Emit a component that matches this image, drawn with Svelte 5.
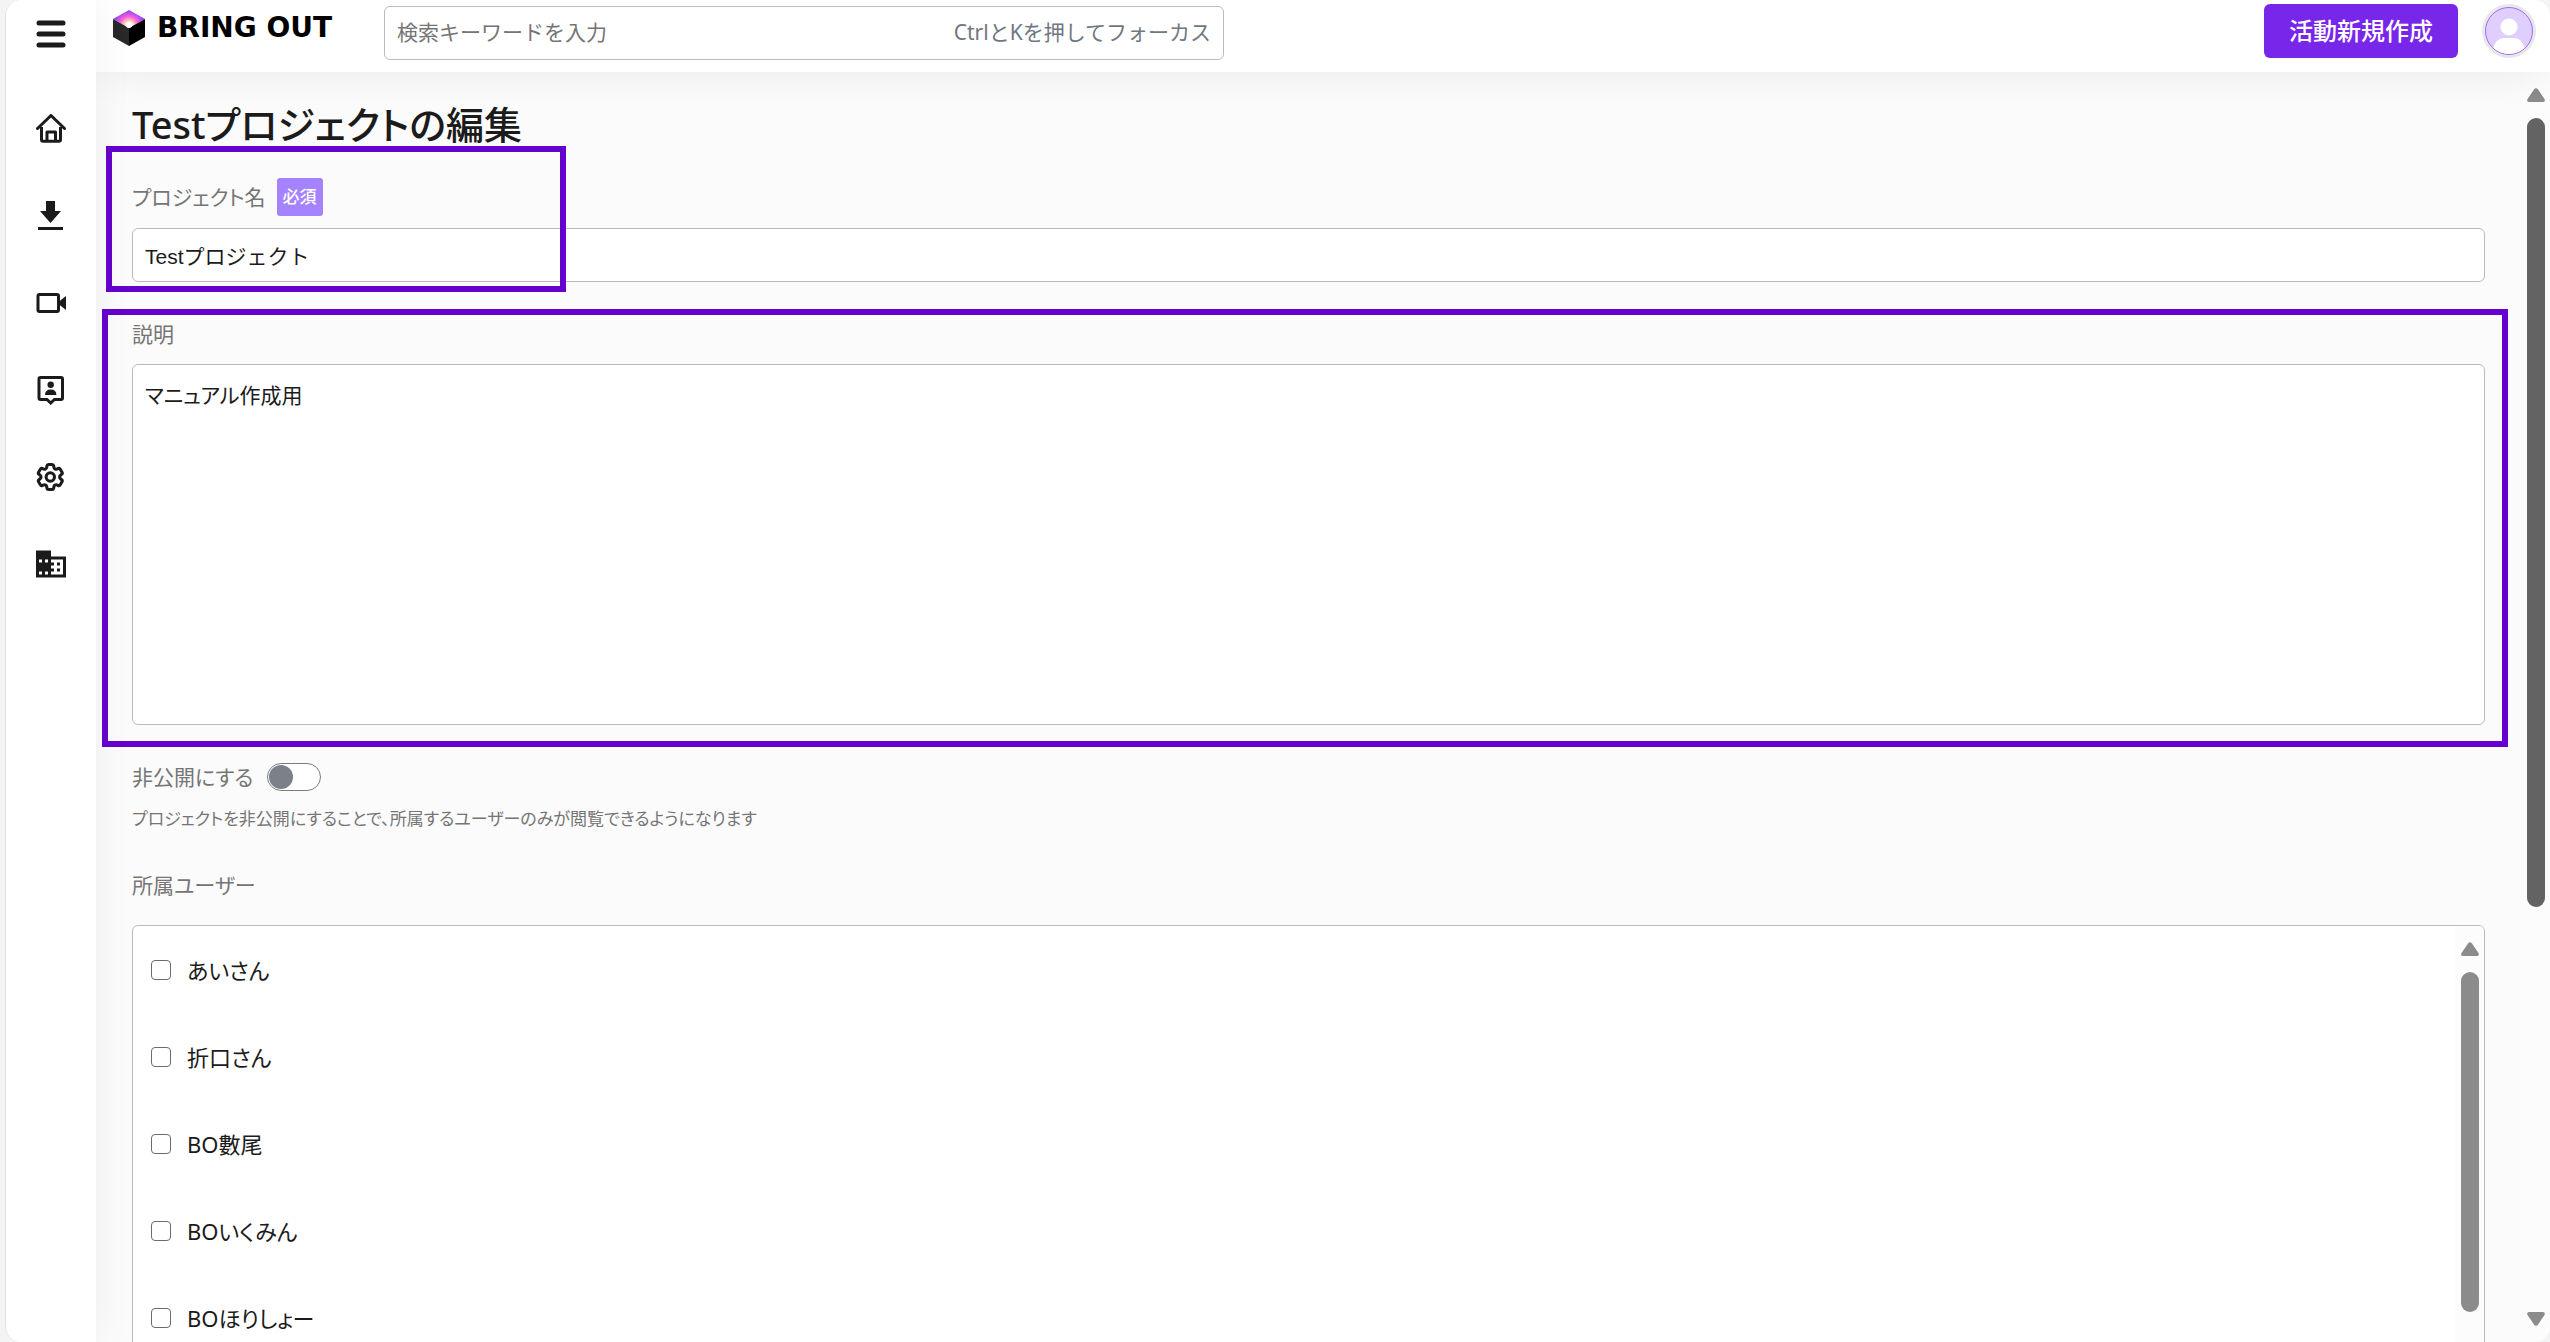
<script>
  const users = [
    { id: 1, name: 'あいさん' },
    { id: 2, name: '折口さん' },
    { id: 3, name: 'BO數尾' },
    { id: 4, name: 'BOいくみん' },
    { id: 5, name: 'BOほりしょー' },
  ];

  let name = $state('Testプロジェクト');
  let description = $state('マニュアル作成用');
  let isPrivate = $state(false);
  let keyword = $state('');
  let members = $state([]);
</script>

{#snippet scrollbar(kind)}
  <div class="scrollbar {kind}" aria-hidden="true">
    <svg class="arrow" viewBox="0 0 18 14"><path d="M7 1.5Q9-1 11 1.5L17.5 11Q18.5 14 16 14H2Q-.5 14 .5 11Z" /></svg>
    <div class="track"><div class="thumb"></div></div>
    <svg class="arrow down" viewBox="0 0 18 14"><path d="M7 1.5Q9-1 11 1.5L17.5 11Q18.5 14 16 14H2Q-.5 14 .5 11Z" /></svg>
  </div>
{/snippet}

<div class="window">
  <nav class="sidebar">
    <button class="menu" type="button" aria-label="メニュー">
      <svg viewBox="0 0 30 30" stroke="#1b1b1b" stroke-width="5" stroke-linecap="round">
        <path d="M3 4h24M3 15h24M3 26h24" />
      </svg>
    </button>
    <a href="#home" aria-label="ホーム">
      <svg viewBox="0 0 30 30" fill="none" stroke="#1b1b1b" stroke-width="3" stroke-linejoin="round">
        <path d="M5.500 13v12.500q0 1.800 1.800 1.800h15.400q1.800 0 1.800-1.800V13" />
        <path d="M1.500 14.500 15 1.500l13.500 13" stroke-linecap="round" />
        <path d="M11 27v-9h8.500v9" />
      </svg>
    </a>
    <a href="#download" aria-label="ダウンロード">
      <svg viewBox="0 0 30 30" fill="#1b1b1b"><path d="M10 0h9v10h6L14.500 22 4 10h6zM2 26h25v3H2z" /></svg>
    </a>
    <a href="#video" aria-label="動画">
      <svg viewBox="0 0 30 30">
        <rect x="2" y="6.500" width="20.500" height="17" rx="1.500" fill="none" stroke="#1b1b1b" stroke-width="3" />
        <path d="M23 13.500 30 8v14l-7-5.500z" fill="#1b1b1b" />
      </svg>
    </a>
    <a href="#contacts" aria-label="連絡先">
      <svg viewBox="0 0 30 30" fill="#1b1b1b">
        <path d="M4.500 2.500h20.500q1.500 0 1.500 1.500v19q0 1.500-1.500 1.500h-6.500L14.700 28 11 24.500H4.500Q3 24.500 3 23V4q0-1.500 1.500-1.500z" fill="none" stroke="#1b1b1b" stroke-width="3" />
        <circle cx="14.700" cy="9.700" r="3.200" />
        <path d="M9 20q0-5.500 5.700-5.500T20.400 20z" />
      </svg>
    </a>
    <a href="#settings" aria-label="設定">
      <svg viewBox="1.700 1.200 21.600 21.600" fill="none" stroke="#1b1b1b" stroke-width="2.200">
        <path d="M9.594 3.940c.09-.542.56-.94 1.110-.94h2.593c.55 0 1.020.398 1.110.94l.213 1.281c.063.374.313.686.645.87.074.04.147.083.22.127.325.196.72.257 1.075.124l1.217-.456a1.125 1.125 0 0 1 1.370.49l1.296 2.247a1.125 1.125 0 0 1-.26 1.431l-1.003.827c-.293.241-.438.613-.43.992a7.723 7.723 0 0 1 0 .255c-.008.378.137.75.43.991l1.004.827c.424.35.534.955.26 1.430l-1.298 2.247a1.125 1.125 0 0 1-1.369.491l-1.217-.456c-.355-.133-.75-.072-1.076.124a6.470 6.470 0 0 1-.22.128c-.331.183-.581.495-.644.869l-.213 1.281c-.09.543-.56.94-1.110.94h-2.594c-.55 0-1.019-.398-1.110-.94l-.213-1.281c-.062-.374-.312-.686-.644-.87a6.520 6.520 0 0 1-.22-.127c-.325-.196-.72-.257-1.076-.124l-1.217.456a1.125 1.125 0 0 1-1.369-.49l-1.297-2.247a1.125 1.125 0 0 1 .26-1.431l1.004-.827c.292-.24.437-.613.43-.991a6.932 6.932 0 0 1 0-.255c.007-.38-.138-.751-.43-.992l-1.004-.827a1.125 1.125 0 0 1-.26-1.430l1.297-2.247a1.125 1.125 0 0 1 1.370-.491l1.216.456c.356.133.751.072 1.076-.124.072-.044.146-.086.22-.128.332-.183.582-.495.644-.869l.214-1.280Z" />
        <circle cx="12" cy="12" r="3" />
      </svg>
    </a>
    <a href="#company" aria-label="会社">
      <svg viewBox="2 2 20 20" fill="#1b1b1b">
        <path d="M12 7V3H2v18h20V7H12zM6 19H4v-2h2v2zm0-8H4V9h2v2zm4 8H8v-2h2v2zm0-8H8V9h2v2zm10 8h-8v-2h2v-2h-2v-2h2v-2h-2V9h8v10zm-2-8h-2v2h2v-2zm0 4h-2v2h2v-2z" />
      </svg>
    </a>
  </nav>

  <div class="page">
    <header>
      <a class="logo" href="#top">
        <svg viewBox="0 0 32 36">
          <defs>
            <radialGradient id="cube-top" cx="16" cy="16" r="17" gradientUnits="userSpaceOnUse">
              <stop offset="0.160" stop-color="#fff" />
              <stop offset="0.300" stop-color="#ffd3b5" />
              <stop offset="0.550" stop-color="#fb62dc" />
              <stop offset="1" stop-color="#7c3cff" />
            </radialGradient>
          </defs>
          <path d="M16 0 32 9 16 18 0 9z" fill="url(#cube-top)" />
          <path d="M0 9 16 18v18L0 27z" fill="#292929" />
          <path d="M32 9 16 18v18l16-9z" fill="#000" />
          <circle cx="16" cy="15" r="3" fill="#fff" />
        </svg>
        <span>BRING OUT</span>
      </a>
      <label class="search">
        <input type="search" placeholder="検索キーワードを入力" aria-label="検索" bind:value={keyword} />
        <span>CtrlとKを押してフォーカス</span>
      </label>
      <button class="create" type="button">活動新規作成</button>
      <button class="avatar" type="button" aria-label="アカウント">
        <svg viewBox="0 0 54 54">
          <defs><clipPath id="face"><circle cx="27" cy="27" r="23" /></clipPath></defs>
          <circle cx="27" cy="27" r="27" fill="#e8e8e8" />
          <circle cx="27" cy="27" r="23.500" fill="#e0ceff" stroke="#9b6cf8" />
          <g fill="#fff" clip-path="url(#face)">
            <circle cx="27" cy="23" r="8.500" />
            <path d="M11 50V46q2-12 12-12h8q10 0 12 12v4z" />
          </g>
        </svg>
      </button>
    </header>

    <main>
      <form>
        <h1>Testプロジェクトの編集</h1>

        <div class="field name-field">
          <div class="label-row">
            <label for="name">プロジェクト名</label>
            <span class="badge">必須</span>
          </div>
          <input id="name" type="text" bind:value={name} />
          <div class="highlight"></div>
        </div>

        <div class="field description-field">
          <label for="description">説明</label>
          <textarea id="description" bind:value={description}></textarea>
          <div class="highlight"></div>
        </div>

        <div class="private">
          <label for="private">非公開にする</label>
          <input id="private" type="checkbox" role="switch" bind:checked={isPrivate} />
        </div>
        <p>プロジェクトを非公開にすることで、所属するユーザーのみが閲覧できるようになります</p>

        <fieldset>
          <legend>所属ユーザー</legend>
          <div class="user-list">
            <ul>
              {#each users as user (user.id)}
                <li>
                  <label>
                    <input type="checkbox" value={user.id} bind:group={members} />
                    {user.name}
                  </label>
                </li>
              {/each}
            </ul>
            {@render scrollbar('inner')}
          </div>
        </fieldset>
      </form>
      {@render scrollbar('outer')}
    </main>
  </div>
</div>

<style>
  :global(body) {
    margin: 0;
    background: #f4f4f4;
  }
  .window, .window * {
    box-sizing: border-box;
  }
  .window {
    display: flex;
    height: 100vh;
    margin-left: 5px;
    overflow: hidden;
    border-left: 1px solid #e2e2e2;
    border-radius: 16px;
    background: #fbfbfb;
    color: #1b1b1b;
    font-family: "Noto Sans", "Noto Sans CJK JP", sans-serif;
    font-size: 21px;
    line-height: 24px;
    font-feature-settings: "palt";
  }
  button, input, textarea {
    font: inherit;
    font-feature-settings: inherit;
    color: inherit;
  }
  button {
    padding: 0;
    border: 0;
    background: none;
    cursor: pointer;
  }
  svg {
    display: block;
  }

  .sidebar {
    position: relative;
    z-index: 2;
    flex: none;
    display: flex;
    flex-direction: column;
    align-items: center;
    gap: 57px;
    width: 90px;
    padding-top: 19px;
    background: #fff;
    box-shadow: 0 0 40px rgba(0, 0, 0, 0.06);
  }
  .sidebar svg {
    width: 30px;
    height: 30px;
  }
  .menu {
    margin-bottom: 8px;
  }

  .page {
    flex: 1;
    min-width: 0;
    display: flex;
    flex-direction: column;
  }
  header {
    position: relative;
    z-index: 1;
    flex: none;
    display: flex;
    align-items: flex-start;
    height: 72px;
    padding: 4px 14px 0 17px;
    background: #fff;
    box-shadow: 0 0 40px rgba(0, 0, 0, 0.08);
  }
  .logo {
    display: flex;
    align-items: center;
    gap: 12px;
    width: 271px;
    height: 48px;
    color: #000;
    font: bold 28px/32px "DejaVu Sans", sans-serif;
    text-decoration: none;
    white-space: nowrap;
  }
  .logo svg {
    flex: none;
    width: 32px;
    height: 36px;
  }
  .search {
    display: flex;
    align-items: center;
    width: 840px;
    height: 54px;
    margin-top: 2px;
    padding: 0 12px 2px;
    border: 1px solid #bbb;
    border-radius: 6px;
    color: #6f7782;
    font-feature-settings: normal;
  }
  .search input {
    flex: 1;
    min-width: 0;
    padding: 0;
    border: 0;
    outline: 0;
    background: none;
    appearance: none;
  }
  .search input::placeholder {
    color: #757575;
    opacity: 1;
  }
  .create {
    width: 194px;
    height: 54px;
    margin-left: auto;
    border-radius: 6px;
    background: #7826ea;
    color: #fff;
    font-size: 24px;
    font-weight: 500;
  }
  .avatar {
    width: 54px;
    height: 54px;
    margin-left: 24px;
  }

  main {
    flex: 1;
    min-height: 0;
    display: flex;
  }
  form {
    flex: 1;
    min-width: 0;
    padding: 28px 36px 0;
    overflow: hidden;
  }
  h1 {
    margin: 0;
    font-size: 38px;
    font-weight: 500;
    line-height: 48px;
  }
  label, legend {
    color: #757575;
  }
  .field {
    position: relative;
    display: flex;
    flex-direction: column;
  }
  .name-field {
    gap: 12px;
    margin-top: 30px;
  }
  .description-field {
    gap: 18px;
    margin-top: 40px;
  }
  .label-row {
    display: flex;
    align-items: center;
    gap: 11px;
  }
  .badge {
    padding: 7px 6px;
    border-radius: 3px;
    background: #a583ff;
    color: #fff;
    font-size: 17px;
    font-weight: 500;
  }
  .field input, .field textarea {
    width: 100%;
    border: 1px solid #bbb;
    border-radius: 6px;
    background: #fff;
    outline: 0;
  }
  .field input {
    height: 54px;
    padding: 0 12px;
    font-family: "Liberation Sans", "Noto Sans CJK JP", sans-serif;
    font-feature-settings: normal;
  }
  .field textarea {
    display: block;
    height: 361px;
    padding: 18px 12px;
    resize: none;
  }
  /* callout frames round the two fields */
  .highlight {
    position: absolute;
    border: 6px solid #6600cc;
    pointer-events: none;
  }
  .name-field .highlight {
    top: -32px;
    bottom: -10px;
    left: -26px;
    width: 460px;
  }
  .description-field .highlight {
    top: -13px;
    right: -23px;
    bottom: -22px;
    left: -30px;
  }

  .private {
    display: flex;
    align-items: center;
    gap: 14px;
    margin-top: 38px;
  }
  .private input {
    appearance: none;
    display: flex;
    width: 54px;
    height: 28px;
    margin: 0;
    padding: 1px;
    border: 1px solid #777c86;
    border-radius: 14px;
    background: #fff;
  }
  .private input::before {
    content: "";
    width: 24px;
    height: 24px;
    border-radius: 50%;
    background: #7b8089;
  }
  .private input:checked {
    justify-content: flex-end;
  }
  p {
    margin: 16px 0 0;
    color: #757575;
    font-size: 17px;
  }
  fieldset {
    min-width: 0;
    margin: 42px 0 0;
    padding: 0;
    border: 0;
  }
  legend {
    padding: 0;
  }
  .user-list {
    display: flex;
    height: 480px;
    margin-top: 28px;
    overflow: hidden;
    border: 1px solid #bbb;
    border-radius: 6px;
    background: #fff;
  }
  ul {
    flex: 1;
    margin: 0;
    padding: 0 18px;
    list-style: none;
  }
  li label {
    display: flex;
    align-items: center;
    gap: 16px;
    height: 87px;
    color: #1b1b1b;
    font-size: 22px;
  }
  li input {
    appearance: none;
    width: 20px;
    height: 20px;
    margin: 0;
    border: 1px solid #6b6b6b;
    border-radius: 4px;
    background: #fff;
  }
  li input:checked {
    background: #7826ea;
  }

  .scrollbar {
    flex: none;
    display: flex;
    flex-direction: column;
    align-items: center;
    gap: 16px;
    width: 29px;
    padding: 16px 0;
    background: #fcfcfc;
  }
  .arrow {
    flex: none;
    width: 18px;
    height: 14px;
    fill: #8b8b8b;
  }
  .arrow.down {
    transform: rotate(180deg);
  }
  .track {
    flex: 1;
  }
  .thumb {
    width: 18px;
    height: 67%;
    border-radius: 9px;
    background: #8b8b8b;
  }
  .inner .thumb {
    height: 88%;
  }
  .outer .thumb {
    background: #636363;
  }
</style>
